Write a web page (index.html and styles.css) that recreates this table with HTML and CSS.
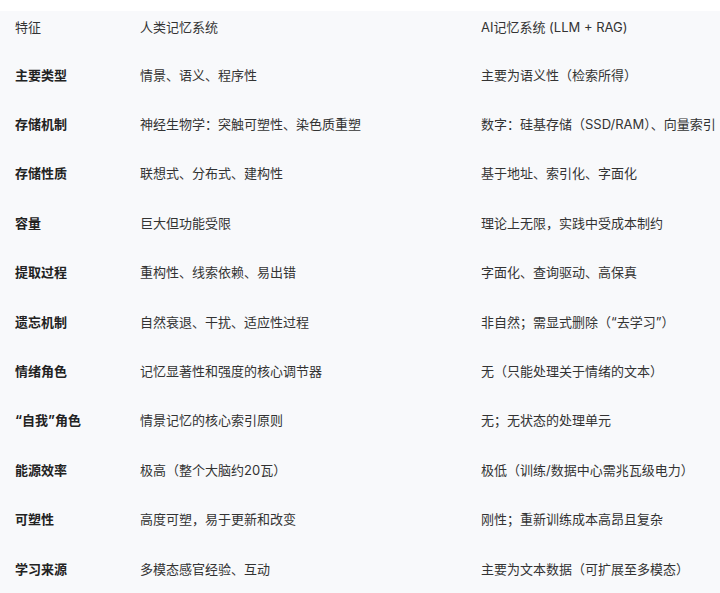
FILE: index.html
```html
<!DOCTYPE html>
<html lang="zh-CN">
<head>
<meta charset="utf-8">
<link rel="stylesheet" href="styles.css">
</head>
<body>
<div class="table">
  <div class="row head"><div>特征</div><div>人类记忆系统</div><div>AI记忆系统 (LLM + RAG)</div></div>
  <div class="row"><div class="k">主要类型</div><div>情景、语义、程序性</div><div>主要为语义性（检索所得）</div></div>
  <div class="row"><div class="k">存储机制</div><div>神经生物学：突触可塑性、染色质重塑</div><div>数字：硅基存储（SSD/RAM）、向量索引</div></div>
  <div class="row"><div class="k">存储性质</div><div>联想式、分布式、建构性</div><div>基于地址、索引化、字面化</div></div>
  <div class="row"><div class="k">容量</div><div>巨大但功能受限</div><div>理论上无限，实践中受成本制约</div></div>
  <div class="row"><div class="k">提取过程</div><div>重构性、线索依赖、易出错</div><div>字面化、查询驱动、高保真</div></div>
  <div class="row"><div class="k">遗忘机制</div><div>自然衰退、干扰、适应性过程</div><div>非自然；需显式删除（“去学习”）</div></div>
  <div class="row"><div class="k">情绪角色</div><div>记忆显著性和强度的核心调节器</div><div>无（只能处理关于情绪的文本）</div></div>
  <div class="row"><div class="k">“自我”角色</div><div>情景记忆的核心索引原则</div><div>无；无状态的处理单元</div></div>
  <div class="row"><div class="k">能源效率</div><div>极高（整个大脑约20瓦）</div><div>极低（训练/数据中心需兆瓦级电力）</div></div>
  <div class="row"><div class="k">可塑性</div><div>高度可塑，易于更新和改变</div><div>刚性；重新训练成本高昂且复杂</div></div>
  <div class="row"><div class="k">学习来源</div><div>多模态感官经验、互动</div><div>主要为文本数据（可扩展至多模态）</div></div>
</div>
</body>
</html>
```

FILE: styles.css
```css
html, body {
  margin: 0;
  padding: 0;
  background: #ffffff;
}
body {
  padding-top: 11px;
  font-family: Inter, "Noto Sans CJK SC", "Noto Sans", sans-serif;
  font-size: 13px;
  color: #333333;
  overflow: hidden;
}
.table {
  background: #f8f9fb;
}
.row {
  display: grid;
  grid-template-columns: 125px 341px 1fr;
  padding-left: 15px;
  height: 49.4px;
  align-items: center;
  line-height: 18px;
  white-space: nowrap;
}
.row.head {
  height: 39px;
  align-items: start;
  padding-top: 7px;
  box-sizing: border-box;
}
.k {
  font-weight: 700;
  color: #222222;
}
```
